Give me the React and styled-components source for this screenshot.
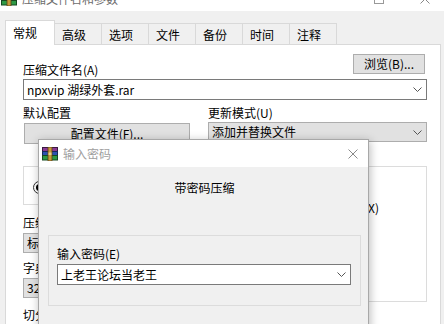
import React from 'react';
import styled, { createGlobalStyle } from 'styled-components';

const GlobalStyle = createGlobalStyle`
  html, body {
    margin: 0;
    padding: 0;
    background: #f0f0f0;
  }
  body {
    font-family: "Noto Sans CJK SC", "Microsoft YaHei", sans-serif;
    font-size: 12px;
    color: #000;
  }
`;

const Window = styled.div`
  position: relative;
  width: 444px;
  height: 324px;
  overflow: hidden;
  background: #f0f0f0;
`;

const TitleBar = styled.div`
  height: 11px;
  background: #fff;
  overflow: hidden;
`;

const TitleInner = styled.div`
  display: flex;
  align-items: center;
  height: 30px;
  margin-top: -16px;
  padding-left: 1px;
`;

const TitleText = styled.span`
  margin-left: 5px;
  color: #6d6d6d;
  line-height: 14px;
`;

const CaptionButtons = styled.div`
  display: flex;
  margin-left: auto;
  margin-right: -4px;
`;

const CaptionBtn = styled.div`
  width: 46px;
  height: 30px;
  display: flex;
  align-items: center;
  justify-content: center;
`;

const TabStrip = styled.div`
  display: flex;
  align-items: flex-end;
  height: 24px;
  margin-top: 9px;
  padding-left: 5px;
`;

const Tab = styled.div`
  position: relative;
  z-index: ${p => (p.$active ? 1 : 0)};
  box-sizing: border-box;
  height: ${p => (p.$active ? '25px' : '21px')};
  margin-bottom: ${p => (p.$active ? '-1px' : '0')};
  margin-left: ${p => (p.$first ? '0' : '-1px')};
  padding: ${p => (p.$active ? '0 17px 0 7px' : '0 15px 0 7px')};
  display: flex;
  align-items: center;
  background: ${p => (p.$active ? '#fff' : '#f0f0f0')};
  border: 1px solid #d9d9d9;
  border-bottom: none;
  line-height: 14px;
  padding-top: ${p => (p.$active ? '0' : '1px')};
`;

const Panel = styled.div`
  box-sizing: border-box;
  height: 300px;
  margin: 0 3px 0 5px;
  padding: 9px 13px 0 17px;
  background: #fff;
  border: 1px solid #d9d9d9;
`;

const HeaderRow = styled.div`
  display: flex;
  justify-content: space-between;
  align-items: flex-start;
  height: 25px;
`;

const Label = styled.div`
  line-height: 18px;
  margin-top: ${p => p.$mt || 0}px;
  white-space: nowrap;
`;

const PushButton = styled.div`
  box-sizing: border-box;
  height: ${p => p.$h || 20}px;
  width: ${p => (p.$w ? `${p.$w}px` : 'auto')};
  margin: ${p => p.$margin || '0'};
  padding: 0 10px;
  display: flex;
  align-items: center;
  justify-content: center;
  background: #e1e1e1;
  border: 1px solid #adadad;
  line-height: 14px;
  white-space: nowrap;
`;

const Combo = styled.div`
  box-sizing: border-box;
  height: ${p => p.$h || 21}px;
  margin-top: ${p => p.$mt || 0}px;
  display: flex;
  align-items: center;
  padding: 0 4px 0 3px;
  background: ${p => (p.$gray ? '#e1e1e1' : '#fff')};
  border: 1px solid ${p => (p.$gray ? '#adadad' : '#7a7a7a')};
  line-height: 14px;
  white-space: nowrap;
`;

const ComboText = styled.span`
  flex: 1;
  overflow: hidden;
`;

const Columns = styled.div`
  display: grid;
  grid-template-columns: 167px 219px;
  column-gap: 18px;
  align-items: start;
  margin-top: ${p => p.$mt || 0}px;
`;

const Column = styled.div`
  display: flex;
  flex-direction: column;
`;

const Group = styled.fieldset`
  box-sizing: border-box;
  height: ${p => p.$h}px;
  margin: 0;
  padding: ${p => p.$pad || '0'};
  border: 1px solid #dcdcdc;
  min-width: 0;
`;

const Legend = styled.legend`
  margin-left: 6px;
  padding: 0 3px;
  line-height: 14px;
`;

const RadioRow = styled.div`
  display: flex;
  gap: 16px;
`;

const Option = styled.label`
  display: flex;
  align-items: center;
  gap: ${p => p.$gap || 5}px;
  height: ${p => p.$h || 14}px;
  white-space: nowrap;
`;

const RadioDot = styled.span`
  box-sizing: border-box;
  width: 13px;
  height: 13px;
  border-radius: 50%;
  border: 1px solid #333;
  background: #fff;
  display: flex;
  align-items: center;
  justify-content: center;
  &::after {
    content: '';
    width: 7px;
    height: 7px;
    border-radius: 50%;
    background: ${p => (p.$on ? '#000' : 'transparent')};
  }
`;

const CheckBox = styled.span`
  box-sizing: border-box;
  width: 13px;
  height: 13px;
  border: 1px solid #333;
  background: #fff;
`;

const Dialog = styled.div`
  position: absolute;
  left: 38px;
  top: 139px;
  width: 331px;
  height: 200px;
  box-sizing: border-box;
  border: 1px solid #a8a8a8;
  background: #f0f0f0;
  box-shadow: 1px 2px 9px rgba(0, 0, 0, 0.28);
`;

const DialogTitle = styled.div`
  height: 27px;
  display: flex;
  align-items: center;
  padding-left: 3px;
  background: #fff;
`;

const DialogTitleText = styled.span`
  margin-left: 5px;
  color: #a0a0a0;
  line-height: 14px;
`;

const DialogClose = styled.div`
  margin-left: auto;
  width: 30px;
  height: 27px;
  display: flex;
  align-items: center;
  justify-content: center;
`;

const DialogBody = styled.div`
  padding: 0 7px 0 9px;
`;

const Heading = styled.div`
  margin-top: 12px;
  line-height: 18px;
  text-align: center;
`;

const Frame = styled.div`
  margin-top: 38px;
  padding: 9px 9px 20px 8px;
  border: 1px solid #dcdcdc;
`;

const Chevron = () => (
  <svg width="9" height="5" viewBox="0 0 9 5">
    <path d="M0.5 0.5 L4.5 4.5 L8.5 0.5" fill="none" stroke="#555" strokeWidth="1" />
  </svg>
);

const CloseGlyph = ({ color = '#000', size = 10 }) => (
  <svg width={size} height={size} viewBox="0 0 10 10">
    <path d="M0.5 0.5 L9.5 9.5 M9.5 0.5 L0.5 9.5" stroke={color} strokeWidth="1" />
  </svg>
);

const RarIcon = () => (
  <svg width="16" height="14" viewBox="0 0 16 14">
    <rect x="0.5" y="0.5" width="15" height="4" fill="#8b3a92" stroke="#3b1a40" />
    <rect x="0.5" y="4.5" width="15" height="4" fill="#2d53b0" stroke="#1a2a5a" />
    <rect x="0.5" y="8.5" width="15" height="4.5" fill="#2f9a45" stroke="#164a22" />
    <rect x="6" y="0" width="4" height="14" fill="#c79a3e" stroke="#5a4010" strokeWidth="0.8" />
    <rect x="6.5" y="5.5" width="3" height="2.5" fill="#e8d28a" />
  </svg>
);

const tabs = ['常规', '高级', '选项', '文件', '备份', '时间', '注释'];

const checks = [
  '压缩后删除原来的文件(D)',
  '创建自解压格式压缩文件(X)',
  '创建固实压缩文件(S)',
  '添加恢复记录(E)',
  '测试压缩文件(T)',
  '锁定压缩文件(L)',
];

export default function App() {
  return (
    <Window>
      <GlobalStyle />
      <TitleBar>
        <TitleInner>
          <RarIcon />
          <TitleText>压缩文件名和参数</TitleText>
          <CaptionButtons>
            <CaptionBtn>
              <svg width="10" height="10" viewBox="0 0 10 10">
                <rect x="0.5" y="0.5" width="9" height="9" fill="none" stroke="#999" />
              </svg>
            </CaptionBtn>
            <CaptionBtn>
              <CloseGlyph color="#888" />
            </CaptionBtn>
          </CaptionButtons>
        </TitleInner>
      </TitleBar>

      <TabStrip>
        {tabs.map((t, i) => (
          <Tab key={t} $active={i === 0} $first={i === 0}>{t}</Tab>
        ))}
      </TabStrip>

      <Panel>
        <HeaderRow>
          <Label $mt={7}>压缩文件名(A)</Label>
          <PushButton $w={72} $margin="0 2px 0 0">浏览(B)...</PushButton>
        </HeaderRow>
        <Combo>
          <ComboText>npxvip 湖绿外套.rar</ComboText>
          <Chevron />
        </Combo>

        <Columns $mt={4}>
          <Column>
            <Label>默认配置</Label>
            <PushButton $h={21} $margin="1px 0 0 1px">配置文件(F)...</PushButton>
          </Column>
          <Column>
            <Label>更新模式(U)</Label>
            <Combo $gray $h={20}>
              <ComboText>添加并替换文件</ComboText>
              <Chevron />
            </Combo>
          </Column>
        </Columns>

        <Columns $mt={15}>
          <Column>
            <Group $h={46} $pad="7px 0 0 9px">
              <Legend>压缩文件格式</Legend>
              <RadioRow>
                <Option><RadioDot $on />RAR</Option>
                <Option><RadioDot />RAR4</Option>
                <Option><RadioDot />ZIP</Option>
              </RadioRow>
            </Group>
            <Label $mt={9}>压缩方式(C)</Label>
            <Combo $gray $h={20} $mt={1}>
              <ComboText>标准</ComboText>
              <Chevron />
            </Combo>
            <Label $mt={6}>字典大小(I)</Label>
            <Combo $gray $h={20} $mt={1}>
              <ComboText>32 MB</ComboText>
              <Chevron />
            </Combo>
            <Label $mt={8}>切分为分卷(V)，大小</Label>
          </Column>
          <Column>
            <Group $h={143} $pad="3px 0 0 6px">
              <Legend>压缩选项</Legend>
              {checks.map(c => (
                <Option key={c} $h={21} $gap={4}><CheckBox />{c}</Option>
              ))}
            </Group>
          </Column>
        </Columns>
      </Panel>

      <Dialog>
        <DialogTitle>
          <RarIcon />
          <DialogTitleText>输入密码</DialogTitleText>
          <DialogClose>
            <CloseGlyph color="#8a8a8a" />
          </DialogClose>
        </DialogTitle>
        <DialogBody>
          <Heading>带密码压缩</Heading>
          <Frame>
            <Label>输入密码(E)</Label>
            <Combo $h={21} $mt={1}>
              <ComboText>上老王论坛当老王</ComboText>
              <Chevron />
            </Combo>
          </Frame>
        </DialogBody>
      </Dialog>
    </Window>
  );
}
